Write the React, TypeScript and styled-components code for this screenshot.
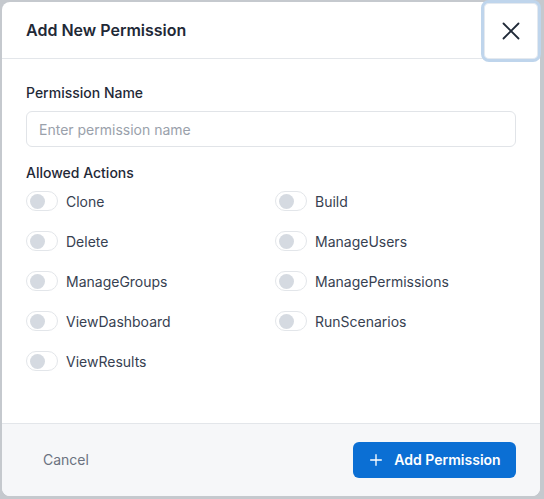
import React from "react";
import styled, { createGlobalStyle } from "styled-components";

const Global = createGlobalStyle`
  html, body { margin: 0; padding: 0; }
  body {
    background: #c5c9ce;
    font-family: Inter, "Noto Sans", sans-serif;
    -webkit-font-smoothing: antialiased;
  }
  * { box-sizing: border-box; }
`;

const Page = styled.div`
  padding: 2px 4px 3px 2px;
  height: 499px;
`;

const Modal = styled.div`
  width: 538px;
  height: 494px;
  background: #fff;
  border-radius: 8px;
  display: flex;
  flex-direction: column;
`;

const Header = styled.div`
  height: 57px;
  display: flex;
  align-items: flex-start;
  justify-content: space-between;
  padding-left: 24px;
  border-bottom: 1px solid #e3e6ea;
`;

const Title = styled.h2`
  margin: 0;
  line-height: 56px;
  font-size: 16px;
  font-weight: 600;
  color: #1f2937;
`;

const CloseButton = styled.button`
  width: 60px;
  height: 62px;
  margin-top: -2px;
  margin-right: -1px;
  background: #fff;
  border: 3px solid #bfd5ec;
  box-shadow: inset 0 0 0 1px #e4e9ef;
  border-radius: 8px;
  display: flex;
  align-items: center;
  justify-content: center;
  padding: 0;
  color: #1f2937;
  cursor: pointer;
`;

const Body = styled.div`
  flex: 1;
  padding: 24px 24px 0;
  display: flex;
  flex-direction: column;
`;

const Label = styled.label`
  font-size: 14px;
  line-height: 20px;
  font-weight: 500;
  color: #1f2937;
`;

const Input = styled.input`
  margin-top: 8px;
  height: 36px;
  width: 100%;
  border: 1px solid #e1e4e8;
  border-radius: 6px;
  padding: 0 12px;
  font-family: inherit;
  font-size: 14px;
  color: #1f2937;
  outline: none;
  &::placeholder { color: #9aa1ab; }
`;

const SectionLabel = styled(Label)`
  margin-top: 16px;
`;

const Grid = styled.div`
  margin-top: 8px;
  display: grid;
  grid-template-columns: 1fr 1fr;
  column-gap: 8px;
  row-gap: 20px;
`;

const ToggleRow = styled.div`
  display: flex;
  align-items: center;
  gap: 8px;
  height: 20px;
`;

const Track = styled.span`
  width: 32px;
  height: 20px;
  border-radius: 10px;
  border: 1px solid #e3e6ea;
  background: #fff;
  display: flex;
  align-items: center;
  padding-left: 3px;
`;

const Knob = styled.span`
  width: 15px;
  height: 15px;
  border-radius: 50%;
  background: #d5dae1;
`;

const ToggleText = styled.span`
  font-size: 14px;
  color: #374151;
`;

const Footer = styled.div`
  height: 73px;
  border-top: 1px solid #e3e6ea;
  background: #f6f7f9;
  border-radius: 0 0 8px 8px;
  display: flex;
  align-items: center;
  justify-content: space-between;
  padding: 0 24px 1px;
`;

const CancelButton = styled.button`
  background: transparent;
  border: none;
  font-family: inherit;
  font-size: 14px;
  color: #6b7280;
  padding: 0 17px;
  height: 36px;
  cursor: pointer;
`;

const PrimaryButton = styled.button`
  height: 36px;
  width: 163px;
  background: #0b6fd4;
  border: none;
  border-radius: 6px;
  color: #fff;
  font-family: inherit;
  font-size: 14px;
  font-weight: 600;
  display: flex;
  align-items: center;
  justify-content: center;
  gap: 10px;
  cursor: pointer;
`;

const actions = [
  "Clone",
  "Build",
  "Delete",
  "ManageUsers",
  "ManageGroups",
  "ManagePermissions",
  "ViewDashboard",
  "RunScenarios",
  "ViewResults",
];

export default function App() {
  return (
    <>
      <Global />
      <Page>
        <Modal>
          <Header>
            <Title>Add New Permission</Title>
            <CloseButton aria-label="Close">
              <svg width="24" height="24" viewBox="0 0 24 24" fill="none" stroke="currentColor" strokeWidth="1.8" strokeLinecap="round">
                <path d="M4.5 4.5l15 15M19.5 4.5l-15 15" />
              </svg>
            </CloseButton>
          </Header>
          <Body>
            <Label>Permission Name</Label>
            <Input placeholder="Enter permission name" />
            <SectionLabel>Allowed Actions</SectionLabel>
            <Grid>
              {actions.map((a) => (
                <ToggleRow key={a}>
                  <Track>
                    <Knob />
                  </Track>
                  <ToggleText>{a}</ToggleText>
                </ToggleRow>
              ))}
            </Grid>
          </Body>
          <Footer>
            <CancelButton>Cancel</CancelButton>
            <PrimaryButton>
              <svg width="16" height="16" viewBox="0 0 24 24" fill="none" stroke="currentColor" strokeWidth="2" strokeLinecap="round">
                <path d="M12 4v16M4 12h16" />
              </svg>
              Add Permission
            </PrimaryButton>
          </Footer>
        </Modal>
      </Page>
    </>
  );
}
